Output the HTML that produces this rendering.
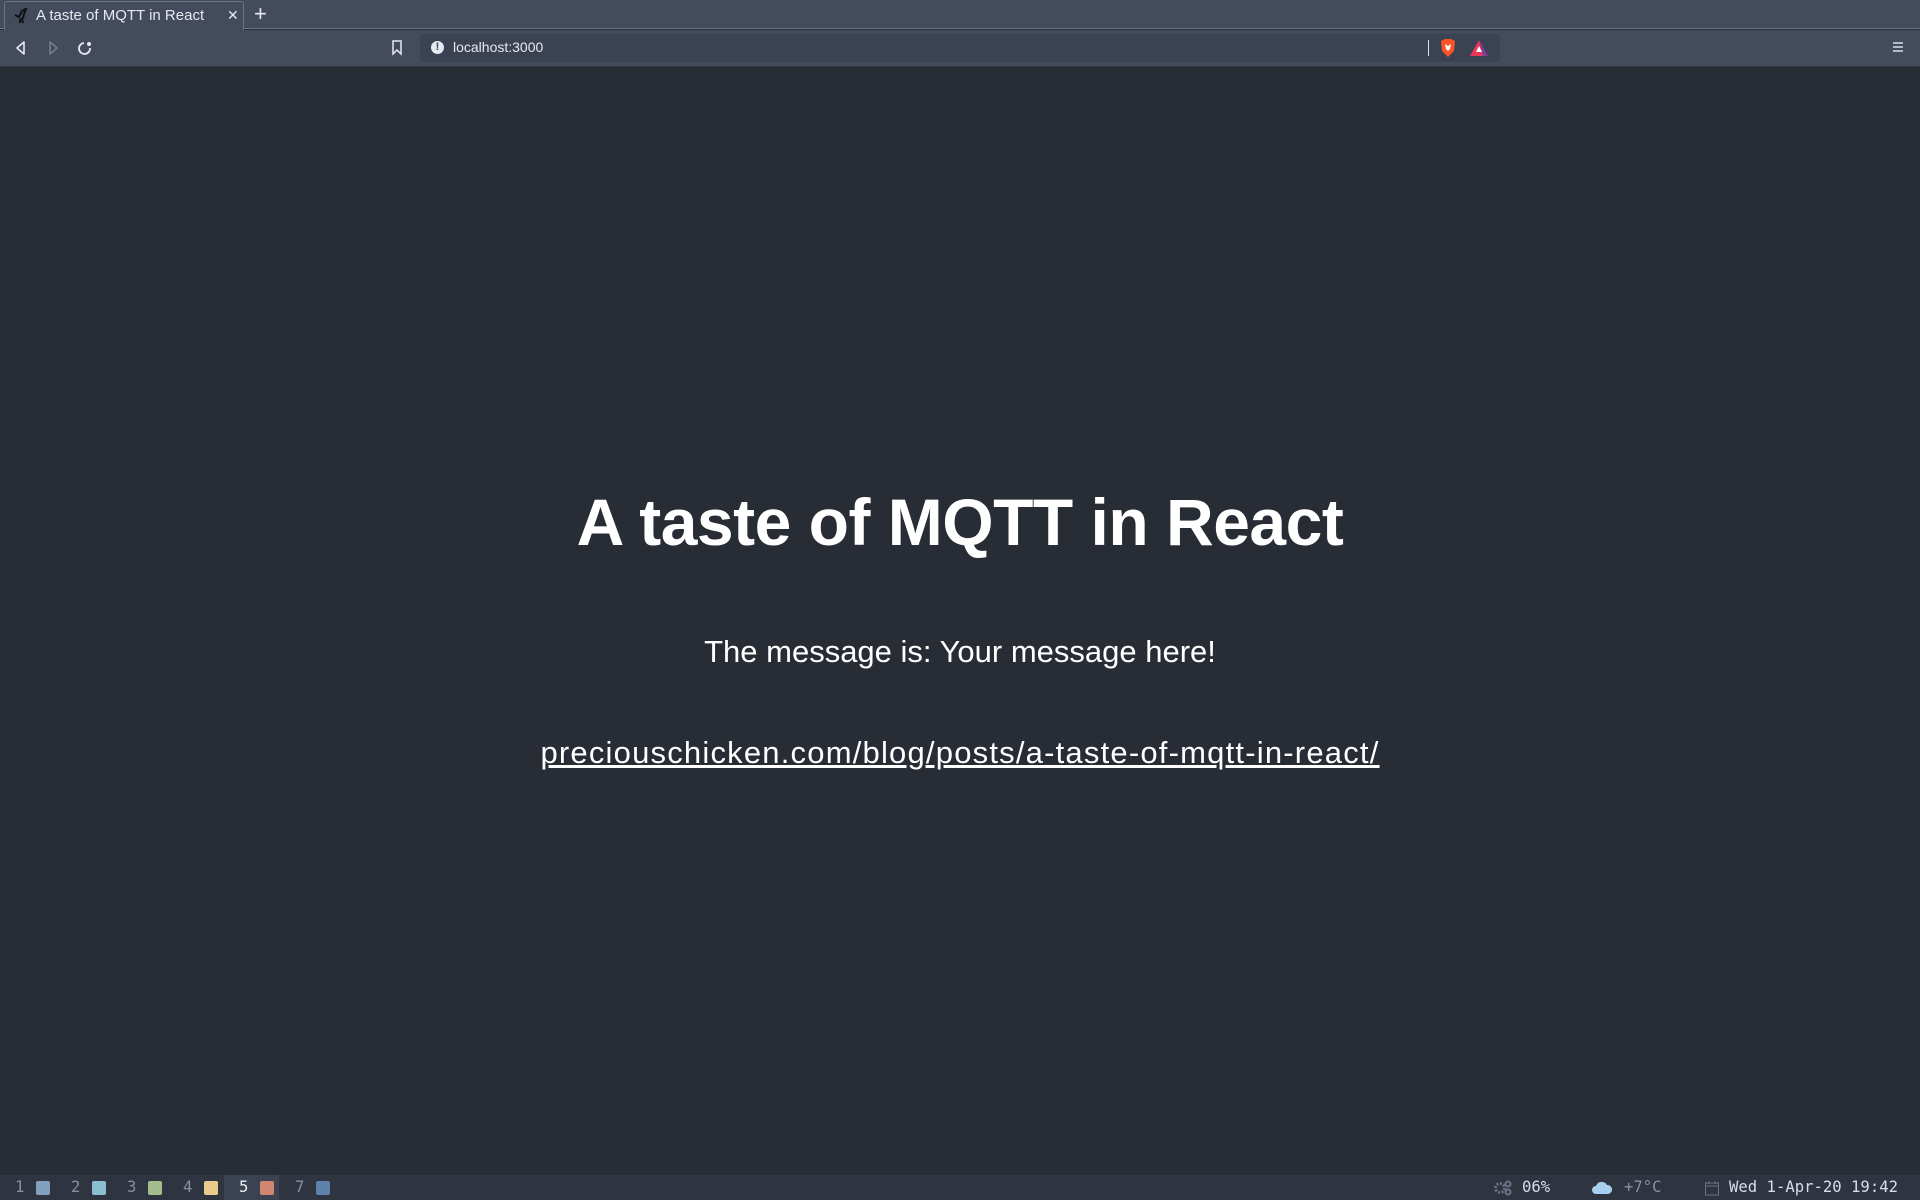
<!DOCTYPE html>
<html><head><meta charset="utf-8"><style>
*{margin:0;padding:0;box-sizing:border-box}
html,body{width:1920px;height:1200px;overflow:hidden;background:#282c35;font-family:"Liberation Sans",sans-serif}
.abs{position:absolute}
#tabs{left:0;top:0;width:1920px;height:29px;background:#434b5c;border-bottom:1px solid #6b7386}
#tab{left:4px;top:1px;width:240px;height:29px;background:#434b5c;border:1px solid #6b7386;border-bottom:none;border-radius:3px 3px 0 0;color:#e5e9f0;font-size:14px}
#tb{left:0;top:30px;width:1920px;height:37px;background:#434b5c;border-bottom:1px solid #2e3440}
#url{left:420px;top:34px;width:1080px;height:28px;background:#3b4252;border-radius:4px}
#page{left:0;top:67px;width:1920px;height:1108px;background:#282c35}
h1{position:absolute;left:0;width:1920px;top:484px;text-align:center;color:#fff;font-size:66px;font-weight:bold;letter-spacing:-0.5px}
.msg{position:absolute;left:0;width:1920px;top:634px;text-align:center;color:#fff;font-size:31px}
.lnk{position:absolute;left:0;width:1920px;top:735px;text-align:center;color:#fff;font-size:31px;text-decoration:underline;letter-spacing:1.2px}
#sb{left:0;top:1175px;width:1920px;height:25px;background:#2e3440;font-family:"DejaVu Sans Mono","Liberation Mono",monospace;font-size:15.6px;color:#8a919e}
.ws{position:absolute;top:0;height:25px;line-height:25px}
.sq{position:absolute;top:6px;width:14px;height:14px;border-radius:2px}
</style></head><body>
<div id="tabs" class="abs"></div>
<div id="tab" class="abs">
 <svg class="abs" style="left:8px;top:6px" width="16" height="16" viewBox="0 0 16 16"><path d="M2 7 L6 9 L9 3 L13 1 L11 6 L10 10 L7 12 L7 15 M9 11 L10 15" stroke="#111" stroke-width="2" fill="none"/></svg>
 <span class="abs" style="left:31px;top:5px;font-size:15px">A taste of MQTT in React</span>
 <span class="abs" style="left:222px;top:5px;font-size:14px">✕</span>
</div>
<div class="abs" style="left:254px;top:1px;color:#e5e9f0;font-size:22px">+</div>
<div id="tb" class="abs"></div>
<svg class="abs" style="left:14px;top:40px" width="80" height="16" viewBox="0 0 80 16">
 <path d="M10 2 L3 8 L10 14 Z" stroke="#e5e9f0" stroke-width="1.6" fill="none" stroke-linejoin="round"/>
 <path d="M36 2 L43 8 L36 14 Z" stroke="#7b8396" stroke-width="1.4" fill="none" stroke-linejoin="round"/>
 <path d="M70 3 A5.5 5.5 0 1 0 76 8" stroke="#e5e9f0" stroke-width="1.8" fill="none"/><circle cx="75" cy="4" r="2" fill="#e5e9f0"/>
</svg>
<svg class="abs" style="left:391px;top:40px" width="12" height="16" viewBox="0 0 12 16"><path d="M2 1 H10 V14 L6 10 L2 14 Z" stroke="#e5e9f0" stroke-width="1.5" fill="none"/></svg>
<div id="url" class="abs"></div>
<div class="abs" style="left:431px;top:41px;width:13px;height:13px;border-radius:50%;background:#e5e9f0;color:#3b4252;font-size:11px;font-weight:bold;text-align:center;line-height:13px">!</div>
<div class="abs" style="left:453px;top:39px;color:#e5e9f0;font-size:14px">localhost:3000</div>
<div class="abs" style="left:1428px;top:40px;width:1px;height:16px;background:#d8dee9"></div>
<svg class="abs" style="left:1439px;top:38px" width="18" height="20" viewBox="0 0 18 20"><path d="M2 3 L6 1 H12 L16 3 L15 13 L9 19 L3 13 Z" fill="#fb542b"/><path d="M6 6 L9 8 L12 6 L11 11 L9 13 L7 11 Z" fill="#fff"/></svg>
<svg class="abs" style="left:1469px;top:39px" width="20" height="18" viewBox="0 0 20 18"><path d="M10 1 L19 17 H1 Z" fill="#e8385a"/><path d="M10 1 L19 17 H14 Z" fill="#7d3c98"/><path d="M10 7 L13 13 H7 Z" fill="#fff"/></svg>
<svg class="abs" style="left:1892px;top:41px" width="12" height="12" viewBox="0 0 12 12"><path d="M1 2H11M1 6H11M1 10H11" stroke="#d8dee9" stroke-width="1.6"/></svg>
<div id="page" class="abs"></div>
<h1>A taste of MQTT in React</h1>
<div class="msg">The message is: Your message here!</div>
<div class="lnk">preciouschicken.com/blog/posts/a-taste-of-mqtt-in-react/</div>
<div id="sb" class="abs">
 <div class="abs" style="left:224px;top:0;width:55px;height:25px;background:#3b4252"></div>
 <span class="ws" style="left:15px">1</span><div class="sq" style="left:36px;background:#81a1c1"></div>
 <span class="ws" style="left:71px">2</span><div class="sq" style="left:92px;background:#88c0d0"></div>
 <span class="ws" style="left:127px">3</span><div class="sq" style="left:148px;background:#a3be8c"></div>
 <span class="ws" style="left:183px">4</span><div class="sq" style="left:204px;background:#ebcb8b"></div>
 <span class="ws" style="left:239px;color:#eceff4">5</span><div class="sq" style="left:260px;background:#d08770"></div>
 <span class="ws" style="left:295px">7</span><div class="sq" style="left:316px;background:#5e81ac"></div>
 <svg class="abs" style="left:1493px;top:5px" width="20" height="16" viewBox="0 0 20 16"><circle cx="7" cy="8" r="4.5" fill="none" stroke="#6b7386" stroke-width="3" stroke-dasharray="2 1.5"/><circle cx="15" cy="4" r="2.5" fill="none" stroke="#6b7386" stroke-width="2"/><circle cx="15" cy="12" r="2.5" fill="none" stroke="#6b7386" stroke-width="2"/></svg>
 <span class="ws" style="left:1522px;color:#d8dee9">06%</span>
 <svg class="abs" style="left:1592px;top:6px" width="20" height="14" viewBox="0 0 20 14"><path d="M4 13 A4 4 0 0 1 4 5 A6 6 0 0 1 15 4 A4.5 4.5 0 0 1 16 13 Z" fill="#a8d0f0"/></svg>
 <span class="ws" style="left:1624px">+7°C</span>
 <svg class="abs" style="left:1704px;top:5px" width="16" height="16" viewBox="0 0 16 16"><rect x="1.5" y="3" width="13" height="12" stroke="#6b7386" fill="none"/><path d="M1.5 6H14.5M5 1V4M11 1V4" stroke="#6b7386"/></svg>
 <span class="ws" style="left:1729px;color:#d8dee9">Wed 1-Apr-20 19:42</span>
</div>
</body></html>
